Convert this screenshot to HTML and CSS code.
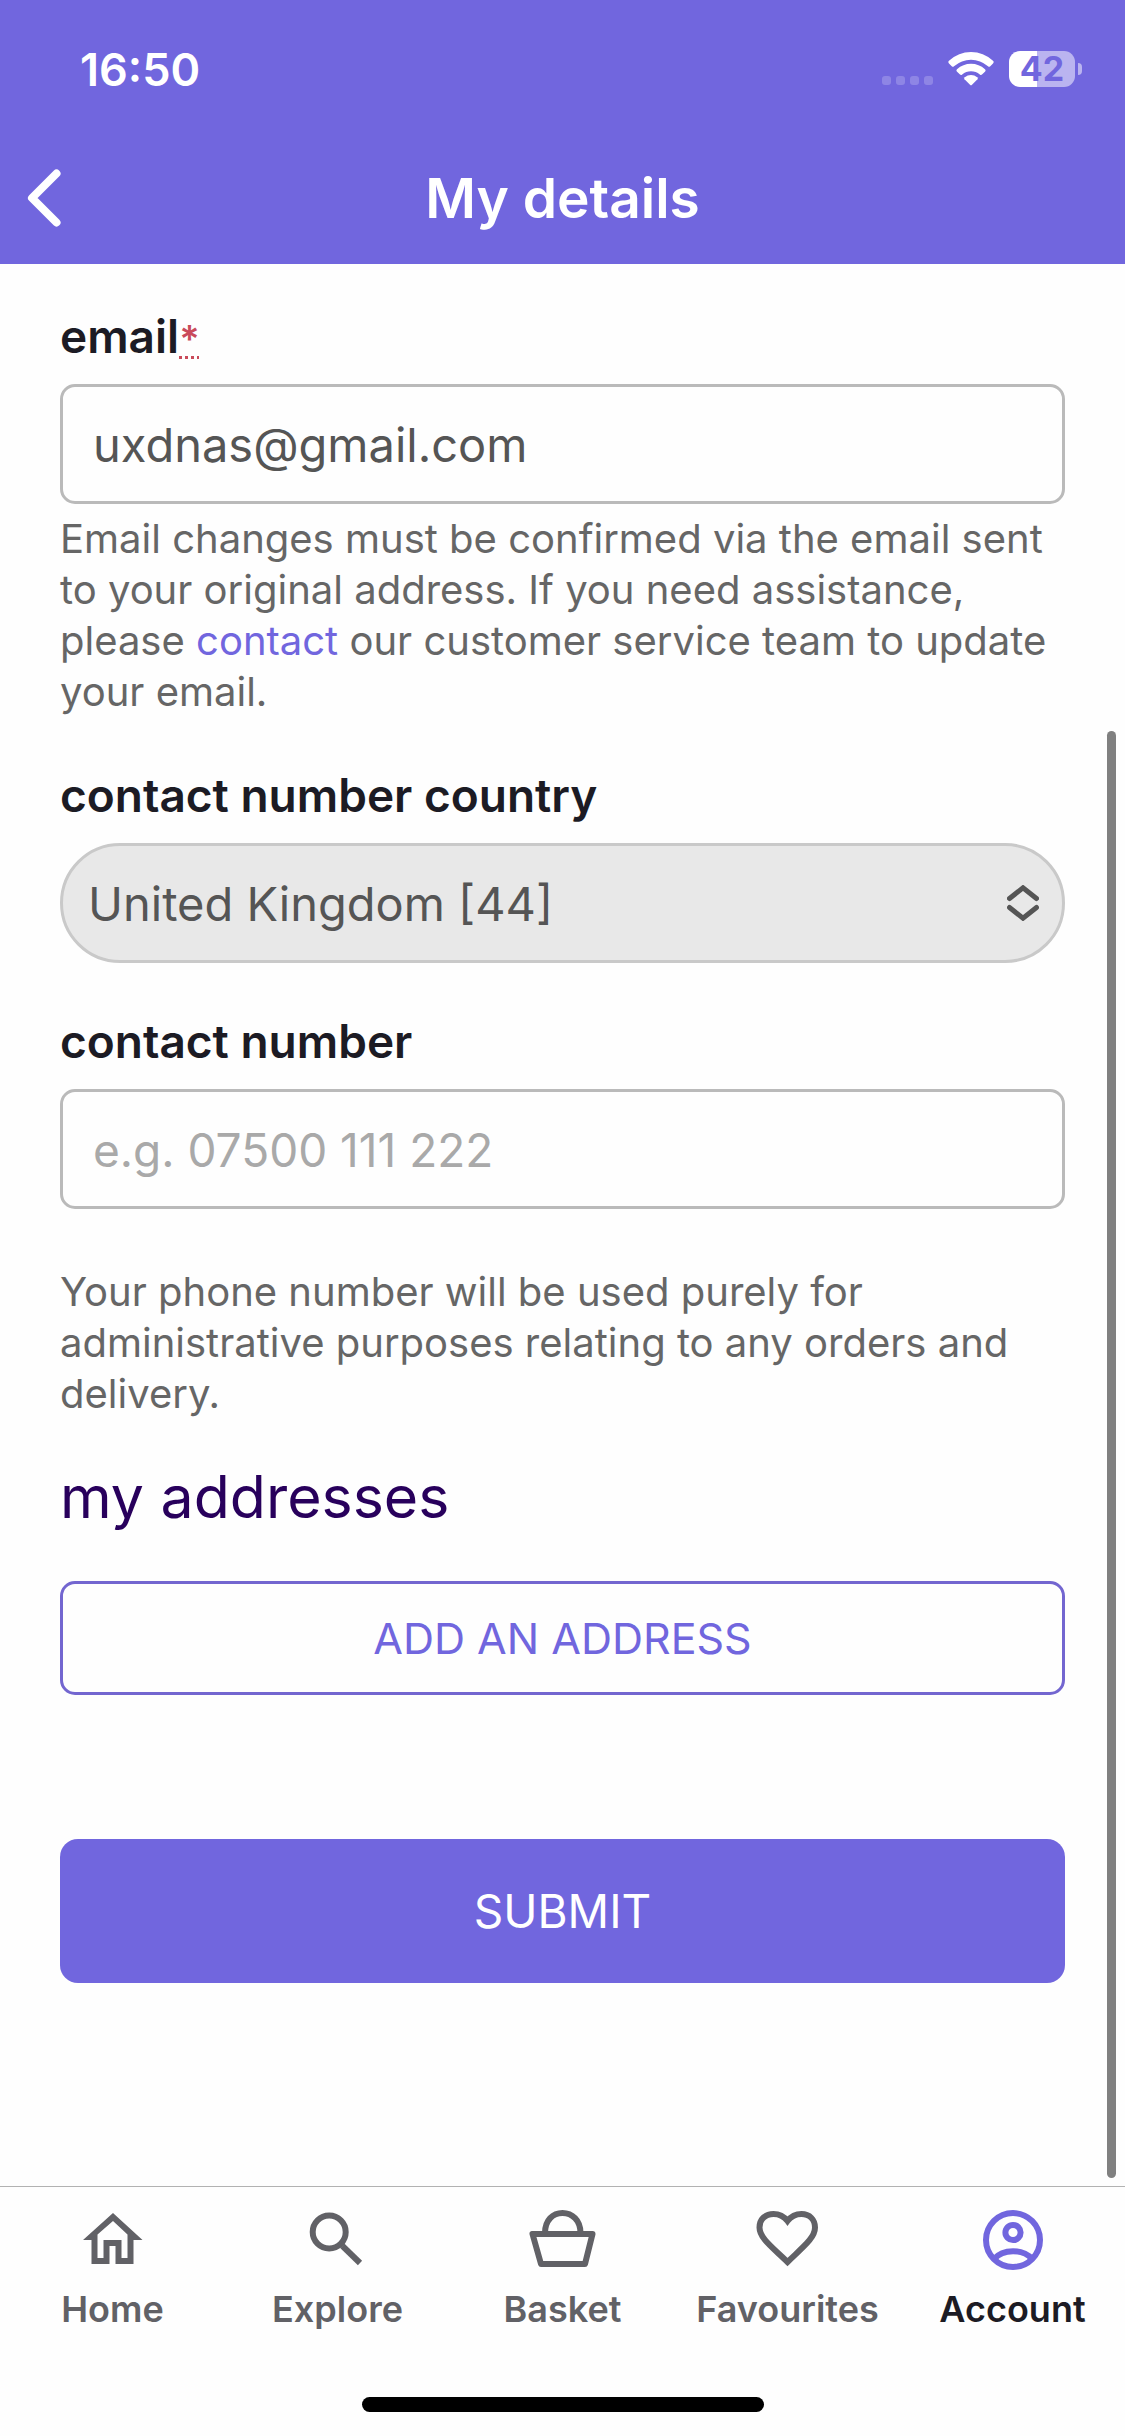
FILE: index.html
```html
<!DOCTYPE html>
<html lang="en">
<head>
  <meta charset="utf-8">
  <meta name="viewport" content="width=device-width, initial-scale=1">
  <title>My details</title>
  <link rel="stylesheet" href="styles.css">
</head>
<body>
  <header class="header">
    <div class="status">
      <time class="status-time">16:50</time>
      <div class="status-icons">
        <span class="signal"><i></i><i></i><i></i><i></i></span>
        <svg class="wifi" viewBox="0 0 46 34" aria-hidden="true">
          <path fill="#fff" d="M1 11.500Q-.300 10 1 8.800Q10.500 0 23 0T45 8.800Q46.300 10 45 11.500L42 14.500Q41 15.300 40 14.300Q32.500 7.700 23 7.700T6 14.300Q5 15.300 4 14.500Z"/>
          <path fill="#fff" d="M8.800 19.500Q7.800 18.300 9 17.200Q15 11.700 23 11.700T37 17.200Q38.200 18.300 37.200 19.500L34 22.600Q33 23.500 31.800 22.500Q28 19.200 23 19.200T14.200 22.500Q13 23.500 12 22.600Z"/>
          <path fill="#fff" d="M16.500 27.200Q15.600 26.200 16.800 25.200Q19.500 23 23 23T29.200 25.200Q30.400 26.200 29.500 27.200L24 32.700Q23 33.700 22 32.700Z"/>
        </svg>
        <span class="battery"><span class="battery-body">42</span><span class="battery-cap"></span></span>
      </div>
    </div>
    <div class="titlebar">
      <button class="back" type="button" aria-label="Back">
        <svg viewBox="0 0 34 58" aria-hidden="true"><path d="M29.500 4.500L5 29L29.500 53.500"/></svg>
      </button>
      <h1 class="title">My details</h1>
    </div>
  </header>

  <main class="main">
    <form class="form">
      <div class="field">
        <label class="label" for="email">email<abbr class="required" title="required">*</abbr></label>
        <input class="input" id="email" type="email" value="uxdnas@gmail.com">
        <p class="help">Email changes must be confirmed via the email sent to your original address. If you need assistance, please <a class="link" href="#contact">contact</a> our customer service team to update your email.</p>
      </div>
      <div class="field">
        <label class="label" for="country">contact number country</label>
        <div class="select-wrap">
          <select class="input select" id="country"><option>United Kingdom [44]</option></select>
          <svg class="select-arrows" viewBox="0 0 32 36" aria-hidden="true"><path d="M2.500 13.500L16 2.800L29.500 13.500M2.500 22.500L16 33.200L29.500 22.500"/></svg>
        </div>
      </div>
      <div class="field">
        <label class="label" for="phone">contact number</label>
        <input class="input" id="phone" type="tel" placeholder="e.g. 07500 111 222">
      </div>
      <p class="note">Your phone number will be used purely for administrative purposes relating to any orders and delivery.</p>
      <h2 class="heading">my addresses</h2>
      <button class="button button-outline" type="button">ADD AN ADDRESS</button>
      <button class="button button-solid" type="submit">SUBMIT</button>
    </form>
    <div class="scroll-thumb" aria-hidden="true"></div>
  </main>

  <footer class="footer">
    <nav class="tabs">
      <a class="tab" href="#home">
        <svg class="tab-icon" viewBox="0 0 72 72" aria-hidden="true"><path fill="currentColor" stroke="none" fill-rule="evenodd" d="M36 9L65.500 36H56.500V60H38.500V42H32.500V60H14.500V36H6ZM36 17L20.500 30.500V54H26.500V36H44.500V54H50.500V30.500Z"/></svg>
        <span>Home</span>
      </a>
      <a class="tab" href="#explore">
        <svg class="tab-icon" viewBox="0 0 72 72" aria-hidden="true"><circle cx="27.200" cy="28" r="16.500"/><path d="M38.500 39.500L41 42"/><path d="M40.500 42L58 59"/></svg>
        <span>Explore</span>
      </a>
      <a class="tab" href="#basket">
        <svg class="tab-icon" viewBox="0 0 72 72" aria-hidden="true"><path stroke-linejoin="round" d="M5.500 30H65.500L58 60H14Z"/><path d="M18 29C18 16 26 9 35.500 9S53.500 16 53.500 29"/></svg>
        <span>Basket</span>
      </a>
      <a class="tab" href="#favourites">
        <svg class="tab-icon" viewBox="0 0 72 72" aria-hidden="true"><path d="M35.500 58C20 43 7.500 34 7.500 23.500C7.500 15.500 13 10 21.500 10C27.500 10 32 12.500 35.500 17C39 12.500 43.500 10 49.500 10C57.500 10 63 15.500 63 23.500C63 34 51 43 35.500 58Z"/></svg>
        <span>Favourites</span>
      </a>
      <a class="tab tab-active" href="#account" aria-current="page">
        <svg class="tab-icon" viewBox="0 0 72 72" aria-hidden="true"><circle cx="36" cy="36" r="27"/><circle cx="36" cy="28.500" r="7.600"/><path d="M17 55C26 44.500 46 44.500 55 55"/></svg>
        <span>Account</span>
      </a>
    </nav>
    <div class="home-indicator"></div>
  </footer>
</body>
</html>
```
FILE: styles.css
```css
:root {
  --purple: #7166de;
  --ink: #1c1b24;
  --grey: #666;
  --line: #bababa;
}

* {
  box-sizing: border-box;
}

body {
  display: flex;
  flex-direction: column;
  min-height: 100vh;
  margin: 0;
  background: #fefefe;
  color: var(--grey);
  font-family: Inter, "Open Sans", sans-serif;
}

/* Header */
.header {
  background: var(--purple);
  color: #fff;
}

.status {
  display: flex;
  align-items: center;
  justify-content: space-between;
  height: 132px;
  padding: 6px 43px 0 80px;
}

.status-time {
  font-size: 45px;
  font-weight: 600;
}

.status-icons,
.signal,
.battery {
  display: flex;
  align-items: center;
}

.status-icons {
  gap: 15px;
}

.signal {
  gap: 5px;
  padding-top: 23px;
}

.signal i {
  width: 9px;
  height: 9px;
  border-radius: 3px;
  background: #8e85e5;
}

.wifi {
  width: 46px;
  height: 34px;
}

.battery {
  gap: 3px;
}

.battery-body {
  width: 66px;
  border-radius: 11px;
  background: linear-gradient(to right, #fff 42%, #bab4f0 42%);
  color: var(--purple);
  font-size: 34px;
  font-weight: 700;
  line-height: 36px;
  text-align: center;
}

.battery-cap {
  width: 4px;
  height: 12px;
  border-radius: 0 6px 6px 0;
  background: #bab4f0;
}

.titlebar {
  display: grid;
  grid-template-columns: 90px 1fr 90px;
  align-items: center;
  height: 132px;
}

.back {
  height: 100%;
  padding: 0 0 0 27px;
  border: 0;
  background: none;
  color: inherit;
}

.back svg {
  display: block;
  width: 34px;
  height: 58px;
  fill: none;
  stroke: currentColor;
  stroke-width: 8;
  stroke-linecap: round;
  stroke-linejoin: round;
}

.title {
  margin: 0;
  font-size: 55px;
  font-weight: 600;
  text-align: center;
}

/* Form */
.main {
  position: relative;
  flex: 1;
  padding: 48px 60px;
}

.form,
.field {
  display: flex;
  flex-direction: column;
}

.field {
  margin-bottom: 54px;
}

.label {
  margin-bottom: 24px;
  color: var(--ink);
  font-size: 46px;
  font-weight: 600;
  line-height: 48px;
}

.required {
  color: #c94a5a;
  font-size: 38px;
  line-height: 1;
  text-decoration: underline dotted 3px;
  text-underline-offset: 3px;
}

.input {
  width: 100%;
  height: 120px;
  padding: 0 30px;
  border: 3px solid var(--line);
  border-radius: 15px;
  background: #fefefe;
  color: #555;
  font-family: inherit;
  font-size: 47px;
}

.input::placeholder {
  color: #a9a9a9;
  font-size: 46px;
  opacity: 1;
}

.select-wrap {
  position: relative;
}

.select {
  display: block;
  padding: 0 25px;
  border-color: #c9c9c9;
  border-radius: 60px;
  background: #e8e8e8;
  appearance: none;
}

.select-arrows {
  position: absolute;
  top: 42px;
  right: 26px;
  width: 32px;
  height: 36px;
  fill: none;
  stroke: #555;
  stroke-width: 5;
  stroke-linecap: round;
  pointer-events: none;
}

.help,
.note {
  margin: 0;
  font-size: 40px;
  line-height: 51px;
}

.help {
  margin-top: 9px;
}

.note {
  margin-top: 3px;
}

.link {
  color: var(--purple);
  text-decoration: none;
}

.heading {
  margin: 42px 0 48px;
  color: #28005c;
  font-size: 59px;
  font-weight: 400;
  line-height: 72px;
}

.button {
  width: 100%;
  font-family: inherit;
}

.button-outline {
  height: 114px;
  border: 3px solid #7366d0;
  border-radius: 15px;
  background: #fefefe;
  color: var(--purple);
  font-size: 43px;
}

.button-solid {
  height: 144px;
  margin-top: 144px;
  border: 0;
  border-radius: 18px;
  background: var(--purple);
  color: #fff;
  font-size: 46px;
}

.scroll-thumb {
  position: absolute;
  top: 467px;
  right: 9px;
  bottom: 8px;
  width: 9px;
  border-radius: 5px;
  background: #808080;
}

/* Tab bar */
.footer {
  padding-bottom: 24px;
  border-top: 1px solid #b2b2b2;
}

.tabs {
  display: grid;
  grid-template-columns: repeat(5, 1fr);
  padding-top: 17px;
}

.tab {
  display: flex;
  flex-direction: column;
  align-items: center;
  gap: 9px;
  color: #616166;
  font-size: 36px;
  font-weight: 600;
  line-height: 48px;
  text-decoration: none;
}

.tab-active {
  color: var(--ink);
}

.tab-icon {
  width: 72px;
  height: 72px;
  fill: none;
  stroke: currentColor;
  stroke-width: 6;
}

.tab-active .tab-icon {
  color: var(--purple);
}

.home-indicator {
  width: 402px;
  height: 15px;
  margin: 64px auto 0;
  border-radius: 8px;
  background: #000;
}
```
